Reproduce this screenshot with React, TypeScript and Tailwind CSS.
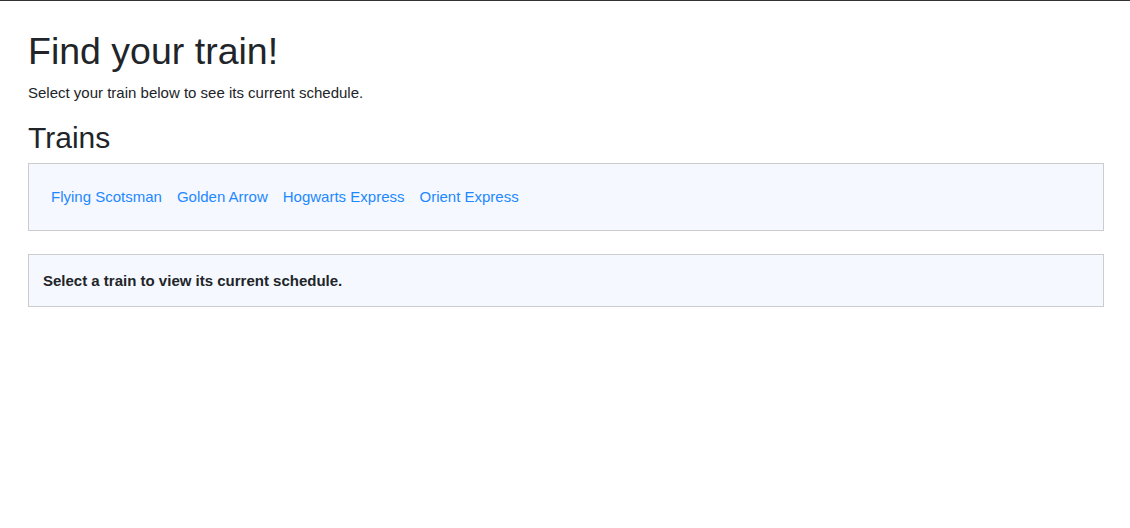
import React from "react";

export default function App() {
  const trains = ["Flying Scotsman", "Golden Arrow", "Hogwarts Express", "Orient Express"];
  return (
    <div className="min-h-[528px] w-full bg-white border-t border-[#333] text-[#212529] text-[15px] leading-[22.5px] font-['Liberation_Sans',Arial,sans-serif]">
      <div className="pl-[28px] pr-[26px] pt-[28px]">
        <h1 className="text-[37.5px] leading-[45px] font-normal mb-[7.5px]">Find your train!</h1>
        <p className="mb-[16px]">Select your train below to see its current schedule.</p>
        <h2 className="text-[30px] leading-[36px] font-normal mb-[7px]">Trains</h2>
        <div className="border border-[#ccc] bg-[#f5f8fe] pl-[14.5px] pr-[15px] py-[15px]">
          <nav className="flex">
            {trains.map((t) => (
              <a key={t} href="#" className="px-[7.5px] py-[7px] leading-[22px] text-[#1e88ff]">
                {t}
              </a>
            ))}
          </nav>
        </div>
        <div className="mt-[23px] border border-[#ccc] bg-[#f5f8fe] px-[14px] py-[14px] leading-[23px] font-bold">
          Select a train to view its current schedule.
        </div>
      </div>
    </div>
  );
}
